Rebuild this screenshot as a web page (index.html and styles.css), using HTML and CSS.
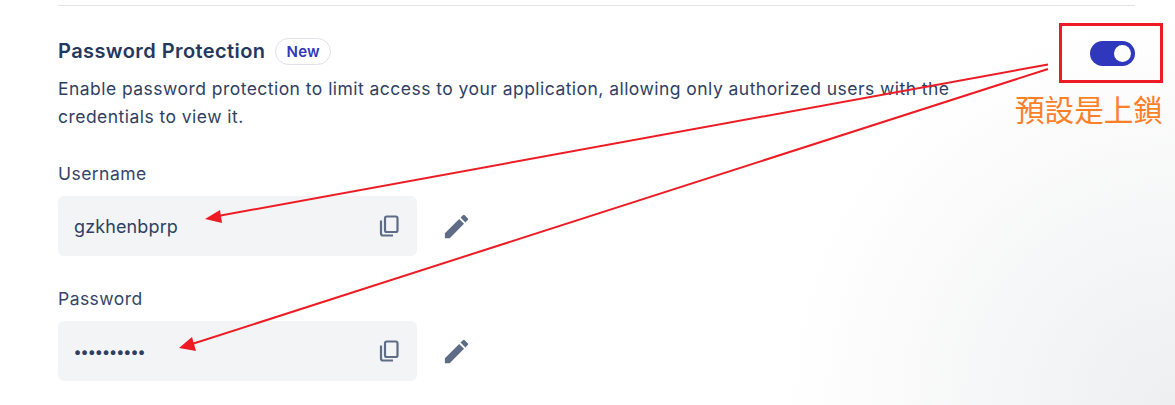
FILE: index.html
```html
<!DOCTYPE html>
<html lang="en">
<head>
<meta charset="utf-8">
<title>Password Protection</title>
<link rel="stylesheet" href="styles.css">
</head>
<body>
<main class="panel">
  <section class="section">
    <div class="head">
      <div class="intro">
        <div class="title-row">
          <h2 class="title">Password Protection</h2>
          <span class="badge">New</span>
        </div>
        <p class="desc">Enable password protection to limit access to your application, allowing only authorized users with the credentials to view it.</p>
      </div>
      <span class="toggle"><span class="knob"></span></span>
    </div>
    <div class="field">
      <label class="label">Username</label>
      <div class="field-row">
        <div class="input">
          <span class="value">gzkhenbprp</span>
          <svg class="copy" viewBox="0 0 24 24" width="24" height="24"><path d="M4 6.5v13a2 2 0 0 0 2 2h10" fill="none" stroke="#5f6c86" stroke-width="2.2"/><rect x="8" y="2.5" width="12.5" height="15.5" rx="1.8" fill="none" stroke="#5f6c86" stroke-width="2.2"/></svg>
        </div>
        <svg class="edit" viewBox="0 0 24 24" width="31" height="31"><path d="M3 17.25V21h3.75L17.81 9.94l-3.75-3.75L3 17.25zM20.71 7.04a1 1 0 0 0 0-1.41l-2.34-2.34a1 1 0 0 0-1.41 0l-1.83 1.83 3.75 3.75 1.83-1.83z" fill="#5f6c86"/></svg>
      </div>
    </div>
    <div class="field">
      <label class="label">Password</label>
      <div class="field-row">
        <div class="input">
          <span class="value dots">••••••••••</span>
          <svg class="copy" viewBox="0 0 24 24" width="24" height="24"><path d="M4 6.5v13a2 2 0 0 0 2 2h10" fill="none" stroke="#5f6c86" stroke-width="2.2"/><rect x="8" y="2.5" width="12.5" height="15.5" rx="1.8" fill="none" stroke="#5f6c86" stroke-width="2.2"/></svg>
        </div>
        <svg class="edit" viewBox="0 0 24 24" width="31" height="31"><path d="M3 17.25V21h3.75L17.81 9.94l-3.75-3.75L3 17.25zM20.71 7.04a1 1 0 0 0 0-1.41l-2.34-2.34a1 1 0 0 0-1.41 0l-1.83 1.83 3.75 3.75 1.83-1.83z" fill="#5f6c86"/></svg>
      </div>
    </div>
  </section>
</main>
<div class="callout"></div>
<div class="note">預設是上鎖</div>
<svg class="arrows" viewBox="0 0 1175 405" width="1175" height="405">
  <line x1="1048" y1="64.5" x2="218" y2="216" stroke="#ed1c24" stroke-width="2"/>
  <polygon points="205,219 220,210 222,223" fill="#ed1c24"/>
  <line x1="1048" y1="69" x2="192" y2="344" stroke="#ed1c24" stroke-width="2"/>
  <polygon points="179,348 192,337 196,351" fill="#ed1c24"/>
</svg>
</body>
</html>
```
FILE: styles.css
```css
* { box-sizing: border-box; }
html, body { margin: 0; height: 405px; overflow: hidden; }
body {
  position: relative;
  font-family: "Inter", "Noto Sans", sans-serif;
  color: #2a3a5e;
  background: radial-gradient(circle at 100% 100%, #eeeff1 0, #fff 390px);
}
.panel { padding: 5px 40px 0 58px; }
.section { border-top: 1px solid #e2e4e8; padding-top: 32px; }
.head { display: flex; justify-content: space-between; align-items: flex-start; }
.intro { width: 900px; }
.title-row { display: flex; align-items: center; gap: 10px; height: 27px; }
.title { margin: 0; font-size: 20px; line-height: 27px; font-weight: 600; letter-spacing: .42px; color: #24375e; }
.badge {
  height: 27px; padding: 0 10px; display: flex; align-items: center;
  border: 1px solid #dfe2ec; border-radius: 14px;
  font-size: 15px; font-weight: 600; letter-spacing: .3px; color: #2f38bd;
}
.desc { margin: 10px 0 0; font-size: 17.5px; line-height: 28px; letter-spacing: .46px; color: #2f3f63; }
.toggle {
  width: 45px; height: 25px; margin-top: 3px; padding: 4px 4px 4px 24px;
  background: #2f38bd; border-radius: 13px; display: flex;
}
.knob { width: 17px; height: 17px; background: #fff; border-radius: 50%; }
.field { margin-top: 31px; }
.label { display: block; font-size: 17.5px; line-height: 24px; letter-spacing: .45px; color: #35456a; }
.field-row { display: flex; align-items: center; gap: 26px; margin-top: 10px; }
.input {
  width: 359px; height: 60px; padding: 0 16px; border-radius: 6px;
  background: #f3f4f6; display: flex; align-items: center; justify-content: space-between;
}
.value { font-size: 18px; letter-spacing: .12px; color: #2f3f63; }
.dots { font-size: 15px; font-weight: 700; letter-spacing: 0; }
.edit { flex: none; margin-left: -2px; }
.callout {
  position: absolute; left: 1059px; top: 23px; width: 104px; height: 60px;
  border: 3px solid #ed1c24;
}
.note {
  position: absolute; left: 1015px; top: 91px; font-size: 29.6px; line-height: 36px;
  font-family: "Noto Sans CJK TC", sans-serif; color: #ff7f27;
}
.arrows { position: absolute; left: 0; top: 0; pointer-events: none; }
```
